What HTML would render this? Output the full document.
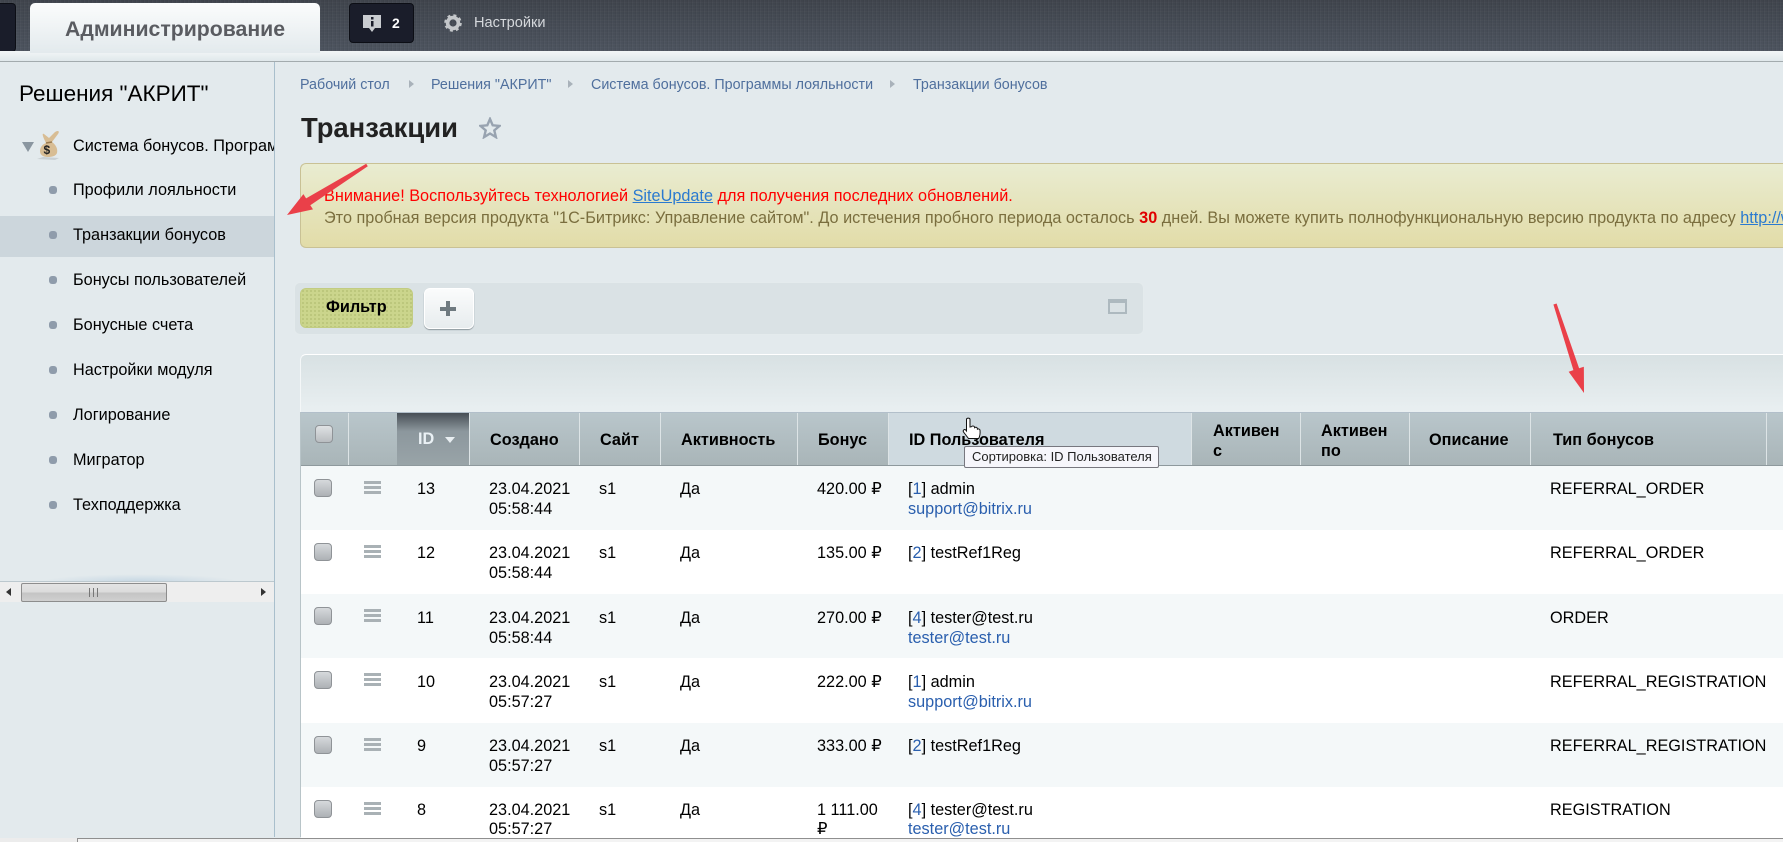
<!DOCTYPE html>
<html lang="ru"><head><meta charset="utf-8"><title>Транзакции</title>
<style>
html,body{margin:0;padding:0}
body{width:1783px;height:842px;overflow:hidden;position:relative;background:#e3eaed;font:16.25px/20px "Liberation Sans",Arial,sans-serif;color:#000}
div,span.a{box-sizing:border-box}
.a,.t{position:absolute}
.t{white-space:nowrap}
#top{left:0;top:0;width:1783px;height:51px;background:
repeating-linear-gradient(90deg,rgba(255,255,255,.025) 0 1px,transparent 1px 3px,rgba(0,0,0,.04) 3px 4px),
repeating-linear-gradient(0deg,rgba(255,255,255,.02) 0 1px,transparent 1px 3px),
linear-gradient(#3f444c,#4c535e)}
#band{left:0;top:51px;width:1783px;height:11px;background:linear-gradient(#f2f6f7,#e0e8eb);border-bottom:1px solid #a3abae}
#tab{left:30px;top:3px;width:290px;height:50px;border-radius:5px 5px 0 0;background:linear-gradient(#fbfcfc,#e3eaed)}
.dk{background:#1a1d2a;border:1px solid #0c0e15;border-radius:4px}
#side{left:0;top:62px;width:275px;height:775px;border-right:1px solid #a9bfcc;overflow:hidden}
.mi{left:73px}
.bu{left:49px;width:8px;height:8px;border-radius:3px;background:#8f9cab}
.bc{top:75px;font-size:14.3px;color:#4f6f9d}
.tri{width:0;height:0;border-left:5px solid #a9b2ba;border-top:4px solid transparent;border-bottom:4px solid transparent;top:80px}
#ban{left:300px;top:163px;width:1483px;height:85px;border:1px solid #c9c195;border-right:0;border-radius:6px 0 0 6px;background:linear-gradient(#e9ecd1,#e2dca8)}
#fb{left:294px;top:282px;width:850px;height:53px;border-radius:6px;background:#dae2e5;border:1px solid #e4ebed}
#ft{left:300px;top:288px;width:113px;height:40px;border-radius:6px;background-color:#cbd58c;background-image:radial-gradient(#b7c276 1px,transparent 1px);background-size:4px 4px;border:1px solid #c2cc82}
#pl{left:424px;top:288px;width:50px;height:41px;border-radius:6px;background:linear-gradient(#fbfcfc,#e7ecee);border:1px solid #fff;box-shadow:0 1px 1px #8d979c}
#tb{left:300px;top:354px;width:1483px;height:58px;border-top:1px solid #fff;border-left:1px solid #f4f7f8;border-radius:6px 0 0 0;background:linear-gradient(#d8e1e3,#e9eff1)}
#hd{left:301px;top:412px;width:1482px;height:54px;background:linear-gradient(#b9c6cb,#a9b5b8);border-top:1px solid #b2bfca;border-bottom:1px solid #8e999d}
.sep{top:413px;width:1px;height:52px;background:#dde4e6}
.h{font-weight:bold;color:#000}
.r{left:301px;width:1482px}
.o{background:#f4f8f9}.e{background:#fff}
.cb{left:13px;top:13px;width:18px;height:18px;border-radius:4px;border:1px solid #8f9397;background:linear-gradient(#d6d9dc,#adb1b5)}
.mn{left:63px;top:15px;width:17px;height:13px;background:repeating-linear-gradient(#a9b1b5 0 3px,transparent 3px 5px)}
.l{color:#2a5fae}
</style></head><body>

<div class="a" id="top"></div>
<div class="a dk" style="left:0;top:3px;width:16px;height:49px;border-left:0;border-radius:0 4px 4px 0"></div>
<div class="a" id="band"></div>
<div class="a" id="tab"></div>
<div class="t" style="left:65px;top:17px;font-size:21.25px;line-height:24px;font-weight:bold;color:#5a5c61">Администрирование</div>
<div class="a dk" style="left:349px;top:3px;width:65px;height:40px"></div>
<svg class="a" style="left:363px;top:14px" width="19" height="19" viewBox="0 0 19 19"><path d="M0 1h18v13h-6l-3 4-3-4H0z" fill="#c9ccd0"/><rect x="8" y="3" width="2.5" height="2.5" fill="#1a1d2a"/><rect x="8" y="7" width="2.5" height="5.5" fill="#1a1d2a"/></svg>
<div class="t" style="left:392px;top:13px;font-size:14px;font-weight:bold;color:#fff">2</div>
<svg class="a" style="left:444px;top:14px" width="18" height="18" viewBox="0 0 20 20"><circle cx="10" cy="10" r="6" fill="none" stroke="#c4c7ca" stroke-width="4"/><circle cx="10" cy="10" r="8.5" fill="none" stroke="#c4c7ca" stroke-width="2.5" stroke-dasharray="3.3 3.4"/></svg>
<div class="t" style="left:474px;top:13px;font-size:14.6px;color:#d5d8dc">Настройки</div>

<div class="a" id="side">
<div class="t" style="left:19px;top:19px;font-size:22.5px;line-height:26px">Решения "АКРИТ"</div>
<div class="a" style="left:22px;top:80px;width:0;height:0;border-top:10px solid #8a96a0;border-left:6px solid transparent;border-right:6px solid transparent"></div>
<svg class="a" style="left:33px;top:68px" width="30" height="30" viewBox="0 0 30 30"><path d="M4 29l6-2 16 1-4 2z" fill="#c9d0d4"/><path d="M13 13C9 5 9 3 11 4l5 4 6-6c3-2 5-1 3 2l-6 8c4 3 6 7 5 11-1 3-5 4-9 4-5 0-8-2-8-6 0-4 3-7 6-8z" fill="#d8bd94"/><path d="M13 13l6-1" stroke="#9a7a50" stroke-width="1.5"/><text x="10.500" y="24" font-family="Liberation Sans" font-size="12" font-weight="bold" fill="#222">$</text></svg>
<div class="t mi" style="top:74px;width:201px;overflow:hidden">Система бонусов. Программа лояльности</div>
<div class="a" style="left:0;top:154px;width:274px;height:41px;background:#ccd6dc"></div>
<div class="a bu" style="top:124px"></div><div class="t mi" style="top:118px">Профили лояльности</div>
<div class="a bu" style="top:169px"></div><div class="t mi" style="top:163px">Транзакции бонусов</div>
<div class="a bu" style="top:214px"></div><div class="t mi" style="top:208px">Бонусы пользователей</div>
<div class="a bu" style="top:259px"></div><div class="t mi" style="top:253px">Бонусные счета</div>
<div class="a bu" style="top:304px"></div><div class="t mi" style="top:298px">Настройки модуля</div>
<div class="a bu" style="top:349px"></div><div class="t mi" style="top:343px">Логирование</div>
<div class="a bu" style="top:394px"></div><div class="t mi" style="top:388px">Мигратор</div>
<div class="a bu" style="top:439px"></div><div class="t mi" style="top:433px">Техподдержка</div>
<div class="a" style="left:40px;top:512px;width:200px;height:8px;background:radial-gradient(ellipse at 50% 100%,rgba(160,190,215,.45),transparent 70%)"></div>
<div class="a" style="left:0;top:519px;width:274px;height:21px;background:#eeeeee;border-top:1px solid #bcc8ce"></div>
<div class="a" style="left:6px;top:526px;width:0;height:0;border-right:5px solid #333;border-top:4px solid transparent;border-bottom:4px solid transparent"></div>
<div class="a" style="left:261px;top:526px;width:0;height:0;border-left:5px solid #333;border-top:4px solid transparent;border-bottom:4px solid transparent"></div>
<div class="a" style="left:21px;top:521px;width:146px;height:19px;border:1px solid #8d8d8d;border-radius:2px;background:linear-gradient(#e4e4e4,#dcdcdc 45%,#c4c4c4 55%,#d0d0d0)"></div>
<div class="a" style="left:89px;top:526px;width:10px;height:9px;background:repeating-linear-gradient(90deg,#777 0 1px,transparent 1px 4px)"></div>
</div>

<div class="t bc" style="left:300px">Рабочий стол</div><div class="a tri" style="left:409px"></div>
<div class="t bc" style="left:431px">Решения "АКРИТ"</div><div class="a tri" style="left:568px"></div>
<div class="t bc" style="left:591px">Система бонусов. Программы лояльности</div><div class="a tri" style="left:890px"></div>
<div class="t bc" style="left:913px">Транзакции бонусов</div>

<div class="t" style="left:301px;top:112px;font-size:27.4px;line-height:32px;font-weight:bold;color:#222">Транзакции</div>
<svg class="a" style="left:479px;top:117px" width="22" height="22" viewBox="0 0 22 22"><path d="M11 2l2.700 6.300 6.800.6-5.200 4.500 1.600 6.700L11 16.500 5.100 20.100l1.600-6.700L1.500 8.900l6.800-.6z" fill="none" stroke="#98a3b0" stroke-width="2.400"/></svg>

<div class="a" id="ban"></div>
<div class="t" style="left:324px;top:186px;color:#f00">Внимание! Воспользуйтесь технологией <span style="color:#2a7ad0;text-decoration:underline">SiteUpdate</span> для получения последних обновлений.</div>
<div class="t" style="left:324px;top:208px;width:1459px;overflow:hidden;color:#7a6e3e">Это пробная версия продукта "1С-Битрикс: Управление сайтом". До истечения пробного периода осталось <b style="color:#e00000">30</b> дней. Вы можете купить полнофункциональную версию продукта по адресу <span style="color:#2a7ad0;text-decoration:underline">http://www.1c-bitrix.ru</span></div>

<div class="a" id="fb"></div>
<div class="a" id="ft"></div>
<div class="t" style="left:326px;top:297px;font-weight:bold">Фильтр</div>
<div class="a" id="pl"></div>
<div class="a" style="left:440px;top:307px;width:16px;height:4px;background:#6f7a80"></div>
<div class="a" style="left:446px;top:301px;width:4px;height:15px;background:#6f7a80"></div>
<div class="a" style="left:1108px;top:299px;width:19px;height:15px;border:2px solid #adb9bf;border-top-width:4px"></div>

<div class="a" id="tb"></div>
<div class="a" style="left:300px;top:412px;width:1px;height:425px;background:#b8c4c8"></div>
<div class="a" id="hd"></div>
<div class="a" style="left:397px;top:413px;width:72px;height:52px;background:linear-gradient(#474e55,#8c979d 35%,#99a4a8)"></div>
<div class="a" style="left:888px;top:413px;width:304px;height:52px;background:#cfdae0"></div>
<div class="a sep" style="left:348px"></div><div class="a sep" style="left:469px"></div><div class="a sep" style="left:579px"></div><div class="a sep" style="left:660px"></div><div class="a sep" style="left:797px"></div><div class="a sep" style="left:888px"></div><div class="a sep" style="left:1191px"></div><div class="a sep" style="left:1300px"></div><div class="a sep" style="left:1409px"></div><div class="a sep" style="left:1530px"></div><div class="a sep" style="left:1766px"></div>
<div class="a" style="left:315px;top:425px;width:18px;height:18px;border-radius:4px;border:1px solid #8f9397;background:linear-gradient(#dfe2e4,#b9bdc0)"></div>
<div class="t h" style="left:418px;top:429px;color:#eaf1f5">ID</div>
<div class="a" style="left:445px;top:437px;width:0;height:0;border-top:6px solid #e8eef1;border-left:5px solid transparent;border-right:5px solid transparent"></div>
<div class="t h" style="left:490px;top:430px">Создано</div>
<div class="t h" style="left:600px;top:430px">Сайт</div>
<div class="t h" style="left:681px;top:430px">Активность</div>
<div class="t h" style="left:818px;top:430px">Бонус</div>
<div class="t h" style="left:909px;top:430px">ID Пользователя</div>
<div class="t h" style="left:1213px;top:421px">Активен<br>с</div>
<div class="t h" style="left:1321px;top:421px">Активен<br>по</div>
<div class="t h" style="left:1429px;top:430px">Описание</div>
<div class="t h" style="left:1553px;top:430px">Тип бонусов</div>

<div class="a r o" style="top:466px;height:64px"><div class="a cb"></div><div class="a mn"></div><div class="t" style="left:116px;top:13px">13</div><div class="t" style="left:188px;top:13px">23.04.2021<br>05:58:44</div><div class="t" style="left:298px;top:13px">s1</div><div class="t" style="left:379px;top:13px">Да</div><div class="t" style="left:516px;top:13px">420.00 ₽</div><div class="t" style="left:607px;top:13px">[<span class="l">1</span>] admin<br><span class="l">support@bitrix.ru</span></div><div class="t" style="left:1249px;top:13px">REFERRAL_ORDER</div></div>
<div class="a r e" style="top:530px;height:64px"><div class="a cb"></div><div class="a mn"></div><div class="t" style="left:116px;top:13px">12</div><div class="t" style="left:188px;top:13px">23.04.2021<br>05:58:44</div><div class="t" style="left:298px;top:13px">s1</div><div class="t" style="left:379px;top:13px">Да</div><div class="t" style="left:516px;top:13px">135.00 ₽</div><div class="t" style="left:607px;top:13px">[<span class="l">2</span>] testRef1Reg</div><div class="t" style="left:1249px;top:13px">REFERRAL_ORDER</div></div>
<div class="a r o" style="top:594px;height:64px"><div class="a cb"></div><div class="a mn"></div><div class="t" style="left:116px;top:14px">11</div><div class="t" style="left:188px;top:14px">23.04.2021<br>05:58:44</div><div class="t" style="left:298px;top:14px">s1</div><div class="t" style="left:379px;top:14px">Да</div><div class="t" style="left:516px;top:14px">270.00 ₽</div><div class="t" style="left:607px;top:14px">[<span class="l">4</span>] tester@test.ru<br><span class="l">tester@test.ru</span></div><div class="t" style="left:1249px;top:14px">ORDER</div></div>
<div class="a r e" style="top:658px;height:65px"><div class="a cb"></div><div class="a mn"></div><div class="t" style="left:116px;top:14px">10</div><div class="t" style="left:188px;top:14px">23.04.2021<br>05:57:27</div><div class="t" style="left:298px;top:14px">s1</div><div class="t" style="left:379px;top:14px">Да</div><div class="t" style="left:516px;top:14px">222.00 ₽</div><div class="t" style="left:607px;top:14px">[<span class="l">1</span>] admin<br><span class="l">support@bitrix.ru</span></div><div class="t" style="left:1249px;top:14px">REFERRAL_REGISTRATION</div></div>
<div class="a r o" style="top:723px;height:64px"><div class="a cb"></div><div class="a mn"></div><div class="t" style="left:116px;top:13px">9</div><div class="t" style="left:188px;top:13px">23.04.2021<br>05:57:27</div><div class="t" style="left:298px;top:13px">s1</div><div class="t" style="left:379px;top:13px">Да</div><div class="t" style="left:516px;top:13px">333.00 ₽</div><div class="t" style="left:607px;top:13px">[<span class="l">2</span>] testRef1Reg</div><div class="t" style="left:1249px;top:13px">REFERRAL_REGISTRATION</div></div>
<div class="a r e" style="top:787px;height:51px;overflow:hidden"><div class="a cb"></div><div class="a mn"></div><div class="t" style="left:116px;top:14px;line-height:19px">8</div><div class="t" style="left:188px;top:14px;line-height:19px">23.04.2021<br>05:57:27</div><div class="t" style="left:298px;top:14px;line-height:19px">s1</div><div class="t" style="left:379px;top:14px;line-height:19px">Да</div><div class="t" style="left:516px;top:14px;line-height:19px">1 111.00<br>₽</div><div class="t" style="left:607px;top:14px;line-height:19px">[<span class="l">4</span>] tester@test.ru<br><span class="l">tester@test.ru</span></div><div class="t" style="left:1249px;top:14px;line-height:19px">REGISTRATION</div></div>

<div class="a" style="left:0;top:838px;width:1783px;height:4px;background:#ececec"></div>
<div class="a" style="left:77px;top:838px;width:1706px;height:4px;background:#f3f3f3;border-top:1px solid #8f8f8f;border-left:1px solid #8f8f8f"></div>

<div class="t" style="left:964px;top:446px;width:195px;height:22px;background:#f6f6fb;border:1px solid #77777f;border-radius:2px;font-size:13px;line-height:20px;padding-left:7px;color:#222">Сортировка: ID Пользователя</div>
<svg class="a" style="left:962px;top:417px" width="20" height="25" viewBox="0 0 20 25"><path d="M4.500 2.500c0-1.800 3.500-1.800 3.500 0V10l1.500-.3c.5-1 2.500-1 3 .2l.1.8c.8-.8 2.400-.5 2.700.6l.1.9c1-.6 2.500-.1 2.600 1 .3 2.800 0 5.800-1.300 8.300H6.500L1.500 15c-1-1.800 1-3.200 2.200-2l.8 1z" fill="#fff" stroke="#111" stroke-width="1"/></svg>

<svg class="a" style="left:0;top:0;pointer-events:none" width="1783" height="842" viewBox="0 0 1783 842">
<polygon points="367.800,166.300 310.300,205.200 313,209.400 287,215 303.400,194.100 306.100,198.400 366.200,163.700" fill="#ea4049"/>
<polygon points="1556.600,303.500 1579.100,368.300 1583.850,366.700 1584,393 1568.650,371.700 1573.400,370.100 1553.400,304.500" fill="#ea4049"/>
</svg>
</body></html>
